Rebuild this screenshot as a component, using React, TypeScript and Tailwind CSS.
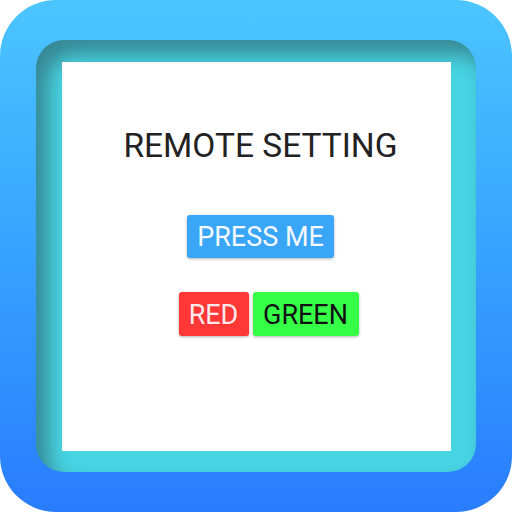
export default function App() {
  return (
    <div className="w-[512px] h-[512px] rounded-[56px] bg-gradient-to-b from-[#4cc5ff] to-[#2a7cff] pl-[36px] pr-[36px] pt-[40px] pb-[40px] font-['Roboto',sans-serif]">
      <div className="w-[440px] h-[432px] rounded-[28px] bg-[#47d4e3] shadow-[inset_12px_14px_20px_rgba(40,60,70,0.5)] pl-[26px] pt-[22px]">
        <div className="w-[389px] h-[389px] bg-white flex flex-col items-center pl-2 pt-[64px]">
          <div className="h-[40px] flex items-center text-[33.5px] leading-none text-[#222222]">REMOTE SETTING</div>
          <button className="mt-[49px] w-[147px] h-[43px] pt-[2px] rounded-[3px] bg-[#3aa6f7] text-[27px] leading-none text-[#f4f8ff] shadow-[0_1px_3px_rgba(0,0,0,0.3)]">
            PRESS ME
          </button>
          <div className="mt-[34px] ml-4 flex gap-[4px]">
            <button className="w-[70px] h-[44px] pt-[2px] rounded-[3px] bg-[#ff3737] text-[27px] leading-none text-[#fde8ec] shadow-[0_1px_3px_rgba(0,0,0,0.3)]">
              RED
            </button>
            <button className="w-[106px] h-[44px] pt-[2px] rounded-[3px] bg-[#36ff48] text-[27px] leading-none text-[#111111] shadow-[0_1px_3px_rgba(0,0,0,0.3)]">
              GREEN
            </button>
          </div>
        </div>
      </div>
    </div>
  );
}
